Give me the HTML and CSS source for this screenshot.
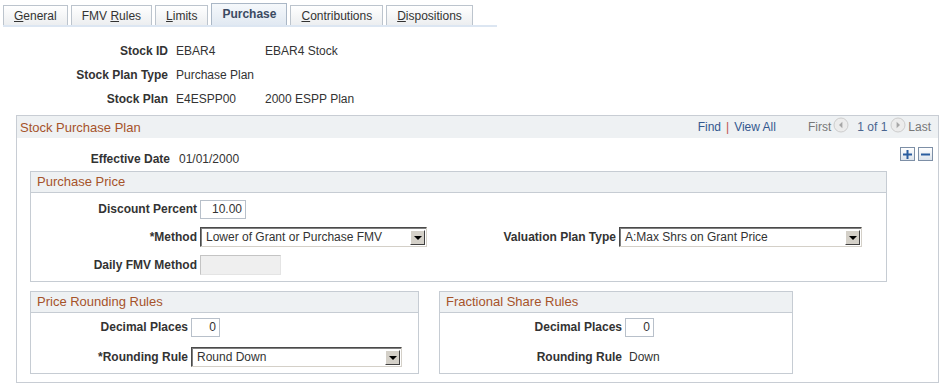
FILE: index.html
```html
<!DOCTYPE html>
<html lang="en">
<head>
    <meta charset="UTF-8">
    <title>Stock Plan - Purchase</title>
    <link rel="stylesheet" href="styles.css">
</head>
<body>
    <!-- Tabs -->
    <div class="tabbar">
        <div class="tab"><u>G</u>eneral</div>
        <div class="tab">FMV <u>R</u>ules</div>
        <div class="tab"><u>L</u>imits</div>
        <div class="tab active">Purchase</div>
        <div class="tab"><u>C</u>ontributions</div>
        <div class="tab"><u>D</u>ispositions</div>
    </div>

    <!-- Key fields -->
    <div class="summary">
        <div class="srow"><span class="slabel">Stock ID</span><span class="sval">EBAR4</span><span>EBAR4 Stock</span></div>
        <div class="srow"><span class="slabel">Stock Plan Type</span><span class="sval">Purchase Plan</span></div>
        <div class="srow"><span class="slabel">Stock Plan</span><span class="sval">E4ESPP00</span><span>2000 ESPP Plan</span></div>
    </div>

    <!-- Stock Purchase Plan -->
    <div class="outer">
        <div class="outer-head">
            <span class="title">Stock Purchase Plan</span>
            <div class="nav">
                <a href="#">Find</a><span class="sep">|</span><a href="#">View All</a>
                <span class="first">First</span>
                <svg class="arrow" width="16" height="16" viewBox="0 0 16 16"><circle cx="8" cy="8" r="7" fill="#ececec" stroke="#cdcdcd"/><path d="M9.4 4.8 L6 8 L9.4 11.2 Z" fill="#a6a6a6"/></svg>
                <span class="count">1 of 1</span>
                <svg class="arrow" width="16" height="16" viewBox="0 0 16 16"><circle cx="8" cy="8" r="7" fill="#ececec" stroke="#cdcdcd"/><path d="M6.6 4.8 L10 8 L6.6 11.2 Z" fill="#a6a6a6"/></svg>
                <span class="last">Last</span>
            </div>
        </div>

        <div class="eff-row">
            <div class="eff"><span class="elabel">Effective Date</span><span>01/01/2000</span></div>
            <div class="rowbtns">
                <span class="rbtn"><svg width="9" height="9" viewBox="0 0 9 9"><path d="M3.5 0h2v3.5H9v2H5.5V9h-2V5.5H0v-2h3.5z" fill="#2a5d9f"/></svg></span>
                <span class="rbtn"><svg width="9" height="9" viewBox="0 0 9 9"><path d="M0 3.5h9v2H0z" fill="#2a5d9f"/></svg></span>
            </div>
        </div>

        <!-- Purchase Price -->
        <div class="group price">
            <div class="group-head">Purchase Price</div>
            <div class="group-body">
                <div class="frow">
                    <span class="flabel w166">Discount Percent</span>
                    <input class="num w46" type="text" value="10.00">
                </div>
                <div class="frow">
                    <span class="flabel w166">*Method</span>
                    <div class="select w227"><span>Lower of Grant or Purchase FMV</span><span class="drop"></span></div>
                    <span class="flabel w189">Valuation Plan Type</span>
                    <div class="select w243"><span>A:Max Shrs on Grant Price</span><span class="drop"></span></div>
                </div>
                <div class="frow">
                    <span class="flabel w166">Daily FMV Method</span>
                    <input class="num w81 disabled" type="text" value="" disabled>
                </div>
            </div>
        </div>

        <div class="pair">
            <!-- Price Rounding Rules -->
            <div class="group rounding">
                <div class="group-head">Price Rounding Rules</div>
                <div class="group-body loose">
                    <div class="frow">
                        <span class="flabel w157">Decimal Places</span>
                        <input class="num w29" type="text" value="0">
                    </div>
                    <div class="frow">
                        <span class="flabel w157">*Rounding Rule</span>
                        <div class="select w211"><span>Round Down</span><span class="drop"></span></div>
                    </div>
                </div>
            </div>

            <!-- Fractional Share Rules -->
            <div class="group fractional">
                <div class="group-head">Fractional Share Rules</div>
                <div class="group-body loose">
                    <div class="frow">
                        <span class="flabel w182">Decimal Places</span>
                        <input class="num w29" type="text" value="0">
                    </div>
                    <div class="frow">
                        <span class="flabel w182">Rounding Rule</span>
                        <span class="plain">Down</span>
                    </div>
                </div>
            </div>
        </div>
    </div>
</body>
</html>
```

FILE: styles.css
```css
/* General Styles */
body {
    font-family: "Liberation Sans", Arial, sans-serif;
    font-size: 12px;
    color: #333333;
    background: #ffffff;
    margin: 0;
    padding: 0;
}

u {
    text-decoration: underline;
}

/* Tabs */
.tabbar {
    display: flex;
    align-items: flex-end;
    gap: 3px;
    width: 494px;
    margin-left: 3px;
    padding-top: 3px;
    border-bottom: 2px solid #dce6f2;
}

.tab {
    height: 19px;
    line-height: 21px;
    padding: 0 10px;
    border: 1px solid #bcc4cd;
    border-bottom: none;
    background: linear-gradient(#ffffff, #eceef0);
    color: #333333;
}

.tab.active {
    height: 21px;
    line-height: 21px;
    font-weight: bold;
    color: #3b4a62;
    border-color: #aab7c6;
    background: linear-gradient(#f5f8fb, #e1e9f2);
}

/* Key fields */
.summary {
    margin-top: 12px;
}

.srow {
    display: flex;
    align-items: center;
    height: 24px;
}

.slabel {
    width: 168px;
    text-align: right;
    font-weight: bold;
    margin-right: 8px;
}

.sval {
    width: 89px;
}

/* Scroll area */
.outer {
    width: 923px;
    margin: 4px 0 0 16px;
    border: 1px solid #c8cdd4;
    box-sizing: border-box;
    padding: 0 0 8px 0;
}

.outer-head {
    display: flex;
    justify-content: space-between;
    align-items: center;
    height: 22px;
    padding: 0 7px 0 3px;
    background: #eef1f3;
}

.title {
    color: #a6532a;
    font-size: 13px;
}

.nav {
    display: flex;
    align-items: center;
}

.nav a {
    color: #34588f;
    text-decoration: none;
}

.nav .sep {
    color: #c0504d;
    margin: 0 5px;
}

.nav .first {
    color: #777777;
    margin-left: 32px;
    margin-right: 2px;
}

.nav .arrow {
    margin-top: -5px;
}

.nav .count {
    color: #4a6590;
    margin: 0 3px 0 8px;
}

.nav .last {
    color: #777777;
    margin-left: 2px;
}

.eff-row {
    display: flex;
    justify-content: space-between;
    align-items: flex-start;
    height: 33px;
    padding-right: 5px;
}

.eff {
    display: flex;
    padding-top: 14px;
    line-height: 14px;
}

.elabel {
    width: 153px;
    text-align: right;
    font-weight: bold;
    margin-right: 9px;
}

.rowbtns {
    display: flex;
    gap: 3px;
    margin-top: 9px;
}

.rbtn {
    display: flex;
    align-items: center;
    justify-content: center;
    width: 13px;
    height: 12px;
    border: 1px solid #7d8fa6;
    background: linear-gradient(#ffffff, #dde4ec);
}

/* Group boxes */
.group {
    border: 1px solid #c6ccd3;
    box-sizing: border-box;
    margin-left: 13px;
}

.group-head {
    height: 20px;
    line-height: 20px;
    padding-left: 6px;
    background: #eef1f3;
    border-bottom: 1px solid #c6ccd3;
    color: #a6532a;
    font-size: 13px;
}

.group-body {
    display: flex;
    flex-direction: column;
    gap: 8px;
    padding: 6px 0 6px 0;
}

.group-body.loose {
    gap: 10px;
    padding: 4px 0 6px 0;
}

.price {
    width: 857px;
}

.pair {
    display: flex;
    gap: 20px;
    margin-top: 9px;
}

.rounding {
    width: 389px;
}

.fractional {
    width: 354px;
    margin-left: 0;
}

/* Fields */
.frow {
    display: flex;
    align-items: center;
    height: 20px;
}

.flabel {
    text-align: right;
    font-weight: bold;
    margin-right: 3px;
}

.w157 { width: 157px; }
.w166 { width: 166px; }
.w182 { width: 182px; }
.w189 { width: 189px; }

.num {
    height: 19px;
    box-sizing: border-box;
    border: 1px solid #b8c0ca;
    padding: 0 3px;
    font-family: "Liberation Sans", Arial, sans-serif;
    font-size: 12px;
    color: #333333;
    text-align: right;
    background: #ffffff;
}

.num.disabled {
    height: 20px;
    background: #efefef;
    border-color: #c4c4c4 #e4e4e4 #e4e4e4 #c4c4c4;
}

.w29 { width: 29px; }
.w46 { width: 46px; }
.w81 { width: 81px; }

.select {
    display: flex;
    align-items: center;
    justify-content: space-between;
    height: 20px;
    box-sizing: border-box;
    border: 1px solid #4a4a4a;
    border-right-color: #d4d0c8;
    border-bottom-color: #d4d0c8;
    box-shadow: inset 1px 1px 0 #808080;
    padding: 0 1px 0 5px;
    background: #ffffff;
    color: #333333;
}

.select .drop {
    width: 15px;
    height: 15px;
    box-sizing: border-box;
    background: #d4d0c8;
    border: 1px solid;
    border-color: #ffffff #404040 #404040 #ffffff;
    position: relative;
}

.select .drop::after {
    content: "";
    position: absolute;
    left: 3px;
    top: 5px;
    border-left: 4px solid transparent;
    border-right: 4px solid transparent;
    border-top: 4px solid #000000;
}

.w211 { width: 211px; }
.w227 { width: 227px; }
.w243 { width: 243px; }

.plain {
    margin-left: 4px;
}
```
